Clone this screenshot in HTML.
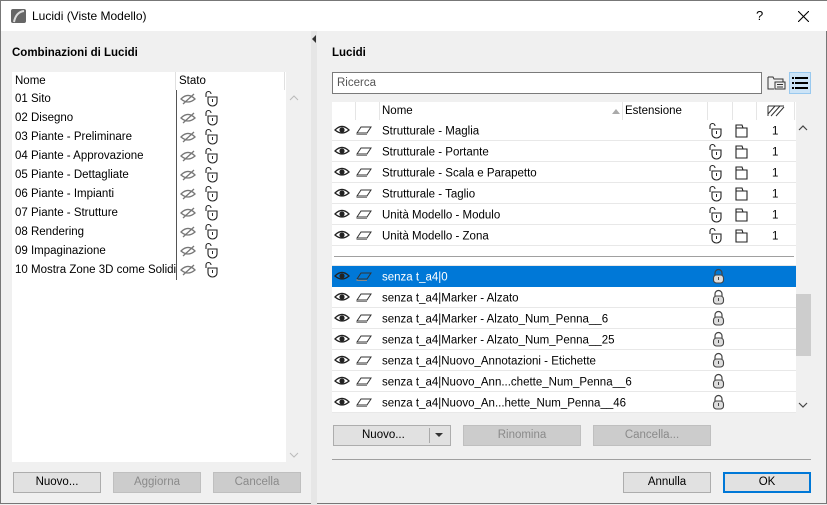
<!DOCTYPE html>
<html><head><meta charset="utf-8"><style>
*{margin:0;padding:0;box-sizing:border-box}
body{width:827px;height:504px;background:#f0f0f0;font-family:"Liberation Sans",sans-serif;font-size:11.5px;color:#000;position:relative;overflow:hidden;border:1px solid #777}
.a{position:absolute}
.t{white-space:nowrap}
.btn{position:absolute;height:21px;border:1px solid #adadad;background:#e1e1e1;text-align:center;line-height:19px;font-size:11.5px}
.dis{color:#8a8a8a;background:#cccccc;border-color:#bfbfbf}
.row{position:absolute;left:0;width:464px;height:21px;border-bottom:1px solid #e8e8e8;background:#fff}
.lr{position:absolute;left:0;height:19px;line-height:19px;padding-left:3px;white-space:nowrap}
</style></head><body>
<div class="a" style="left:0;top:0;width:827px;height:30px;background:#fff"></div>
<svg class="a" style="left:10px;top:8px" width="15" height="14"><rect width="15" height="14" rx="2" fill="#666"/><path d="M3 13 Q5 3 13 2" stroke="#ddd" stroke-width="2" fill="none"/></svg>
<div class="a t" style="left:31px;top:8px;font-size:12px">Lucidi (Viste Modello)</div>
<div class="a t" style="left:755px;top:7px;font-size:13px">?</div>
<svg class="a" style="left:797px;top:10px" width="11" height="11"><path d="M0 0L11 11M11 0L0 11" stroke="#000" stroke-width="1.1"/></svg>

<div class="a" style="left:310px;top:30px;width:6px;height:474px;background:#e6e6e6"></div>
<div class="a" style="left:311px;top:34px;width:0;height:0;border-top:4px solid transparent;border-bottom:4px solid transparent;border-right:4px solid #333"></div>

<div class="a t" style="left:11px;top:46px;font-weight:bold;font-size:11.5px">Combinazioni di Lucidi</div>
<div class="a" style="left:11px;top:71px;width:274px;height:390px;background:#fff"></div>
<div class="a t" style="left:14px;top:74px">Nome</div>
<div class="a" style="left:174px;top:71px;width:1px;height:18px;background:#e0e0e0"></div>
<div class="a t" style="left:178px;top:74px">Stato</div>
<div class="a" style="left:283px;top:71px;width:1px;height:18px;background:#e0e0e0"></div>
<div class="a" style="left:175px;top:89px;width:1px;height:190px;background:#555"></div>
<div class="a" style="left:11px;top:89px;width:165px;height:200px;overflow:hidden">
<div class="lr" style="top:0">01 Sito</div>
<div class="lr" style="top:19px">02 Disegno</div>
<div class="lr" style="top:38px">03 Piante - Preliminare</div>
<div class="lr" style="top:57px">04 Piante - Approvazione</div>
<div class="lr" style="top:76px">05 Piante - Dettagliate</div>
<div class="lr" style="top:95px">06 Piante - Impianti</div>
<div class="lr" style="top:114px">07 Piante - Strutture</div>
<div class="lr" style="top:133px">08 Rendering</div>
<div class="lr" style="top:152px">09 Impaginazione</div>
<div class="lr" style="top:171px">10 Mostra Zone 3D come Solidi</div>
</div>
<svg class="a" style="left:178px;top:89px" width="45" height="190">
<defs><g id="hs"><path d="M2 9 Q9 2 16 9 Q9 15 2 9Z" fill="none" stroke="#777" stroke-width="1.3"/><path d="M4 14L15 4" stroke="#777" stroke-width="1.3"/></g>
<g id="ul"><path d="M27 7V4a2.5 2.5 0 0 1 5 0" fill="none" stroke="#222" stroke-width="1.1"/><path d="M29 7h9v5a4.5 4 0 0 1-9 0z" fill="none" stroke="#222" stroke-width="1.1"/><path d="M33.5 9v3" stroke="#222"/></g></defs>
<g><use href="#hs"/><use href="#ul"/></g>
<g transform="translate(0,19)"><use href="#hs"/><use href="#ul"/></g>
<g transform="translate(0,38)"><use href="#hs"/><use href="#ul"/></g>
<g transform="translate(0,57)"><use href="#hs"/><use href="#ul"/></g>
<g transform="translate(0,76)"><use href="#hs"/><use href="#ul"/></g>
<g transform="translate(0,95)"><use href="#hs"/><use href="#ul"/></g>
<g transform="translate(0,114)"><use href="#hs"/><use href="#ul"/></g>
<g transform="translate(0,133)"><use href="#hs"/><use href="#ul"/></g>
<g transform="translate(0,152)"><use href="#hs"/><use href="#ul"/></g>
<g transform="translate(0,171)"><use href="#hs"/><use href="#ul"/></g>
</svg>
<svg class="a" style="left:288px;top:94px" width="10" height="6"><path d="M1 5L5 1L9 5" stroke="#bbb" fill="none"/></svg>
<svg class="a" style="left:288px;top:451px" width="10" height="6"><path d="M1 1L5 5L9 1" stroke="#bbb" fill="none"/></svg>
<div class="btn" style="left:12px;top:471px;width:88px">Nuovo...</div>
<div class="btn dis" style="left:112px;top:471px;width:88px">Aggiorna</div>
<div class="btn dis" style="left:212px;top:471px;width:88px">Cancella</div>

<div class="a t" style="left:331px;top:46px;font-weight:bold">Lucidi</div>
<div class="a" style="left:331px;top:71px;width:430px;height:22px;border:1px solid #7a7a7a;background:#fff"></div>
<div class="a t" style="left:336px;top:76px;color:#555">Ricerca</div>
<svg class="a" style="left:766px;top:74px" width="20" height="16"><path d="M1 2h5l1 2h9v3" fill="none" stroke="#333"/><path d="M1 2v12h6" fill="none" stroke="#333"/><rect x="8" y="7" width="10" height="7" fill="none" stroke="#333"/><path d="M10 9.5h6M10 12h6" stroke="#333"/></svg>
<div class="a" style="left:788px;top:71px;width:22px;height:22px;background:#cce4f7;border:1px solid #99c9ef"></div>
<svg class="a" style="left:791px;top:76px" width="16" height="12"><g fill="#000"><rect x="0" y="0" width="2" height="2"/><rect x="3" y="0" width="13" height="2"/><rect x="0" y="5" width="2" height="2"/><rect x="3" y="5" width="13" height="2"/><rect x="0" y="10" width="2" height="2"/><rect x="3" y="10" width="13" height="2"/></g></svg>

<div class="a" style="left:331px;top:101px;width:464px;height:311px;background:#fff;overflow:hidden">
<div class="a" style="left:23px;top:0;width:1px;height:18px;background:#e5e5e5"></div>
<div class="a" style="left:47px;top:0;width:1px;height:18px;background:#e5e5e5"></div>
<div class="a t" style="left:50px;top:3px">Nome</div>
<div class="a" style="left:280px;top:7px;width:0;height:0;border-left:4px solid transparent;border-right:4px solid transparent;border-bottom:5px solid #aaa"></div>
<div class="a" style="left:290px;top:0;width:1px;height:18px;background:#e5e5e5"></div>
<div class="a t" style="left:293px;top:3px">Estensione</div>
<div class="a" style="left:375px;top:0;width:1px;height:18px;background:#e5e5e5"></div>
<div class="a" style="left:400px;top:0;width:1px;height:18px;background:#e5e5e5"></div>
<div class="a" style="left:424px;top:0;width:1px;height:18px;background:#e5e5e5"></div>
<div class="a" style="left:462px;top:0;width:1px;height:18px;background:#e5e5e5"></div>
<svg class="a" style="left:435px;top:3px" width="18" height="12"><path d="M1 1h16M1 1v10M1 9l7-8M4 11l9-10M9 11l8-9" stroke="#333" fill="none"/></svg>
</div>

<svg width="0" height="0" style="position:absolute"><defs>
<g id="eye"><path d="M3 10 Q10 3 17 10 Q10 16 3 10Z" fill="none" stroke="#222" stroke-width="1.3"/><circle cx="10" cy="10" r="2.6" fill="#222"/></g>
<g id="lay"><path d="M25 13 L29 7 H39 L35 13Z" fill="none" stroke="#333" stroke-width="1"/><path d="M25 13v1.5h10" stroke="#888" fill="none"/></g>
<g id="ulk"><path d="M378 9V6a2.5 2.5 0 0 1 5 0" fill="none" stroke="#222" stroke-width="1.1"/><path d="M380 9h9v5a4.5 4 0 0 1-9 0z" fill="none" stroke="#222" stroke-width="1.1"/><path d="M384.5 11v3" stroke="#222"/></g>
<g id="fld"><path d="M404 5h6l1 3h4v9h-11z" fill="none" stroke="#222" stroke-width="1.1"/><path d="M404 8h7" stroke="#222"/></g>
<g id="lk"><path d="M383 9V7a3.5 3.5 0 0 1 7 0v2" fill="none" stroke="#444" stroke-width="1.2"/><rect x="381.5" y="9" width="10" height="8" rx="3" fill="#ddd" stroke="#444" stroke-width="1.1"/><path d="M386.5 11v3" stroke="#444"/></g>
</defs></svg>

<div class="a" style="left:331px;top:119px;width:464px;height:293px;overflow:hidden">
<div class="row" style="top:0"></div><div class="row" style="top:21px"></div><div class="row" style="top:42px"></div><div class="row" style="top:63px"></div><div class="row" style="top:84px"></div><div class="row" style="top:105px"></div>
<div class="row" style="top:126px;height:20px"></div>
<div class="a" style="left:2px;top:136px;width:460px;height:1px;background:#a0a0a0"></div>
<div class="row" style="top:146px;background:#0078d7;border-color:#0078d7"></div>
<div class="row" style="top:167px"></div><div class="row" style="top:188px"></div><div class="row" style="top:209px"></div><div class="row" style="top:230px"></div><div class="row" style="top:251px"></div><div class="row" style="top:272px"></div>
<svg class="a" style="left:0;top:0" width="464" height="293">
<g><use href="#eye"/><use href="#lay"/><use href="#ulk"/><use href="#fld"/></g>
<g transform="translate(0,21)"><use href="#eye"/><use href="#lay"/><use href="#ulk"/><use href="#fld"/></g>
<g transform="translate(0,42)"><use href="#eye"/><use href="#lay"/><use href="#ulk"/><use href="#fld"/></g>
<g transform="translate(0,63)"><use href="#eye"/><use href="#lay"/><use href="#ulk"/><use href="#fld"/></g>
<g transform="translate(0,84)"><use href="#eye"/><use href="#lay"/><use href="#ulk"/><use href="#fld"/></g>
<g transform="translate(0,105)"><use href="#eye"/><use href="#lay"/><use href="#ulk"/><use href="#fld"/></g>
<g transform="translate(0,146)"><use href="#eye"/><use href="#lay"/><use href="#lk"/></g>
<g transform="translate(0,167)"><use href="#eye"/><use href="#lay"/><use href="#lk"/></g>
<g transform="translate(0,188)"><use href="#eye"/><use href="#lay"/><use href="#lk"/></g>
<g transform="translate(0,209)"><use href="#eye"/><use href="#lay"/><use href="#lk"/></g>
<g transform="translate(0,230)"><use href="#eye"/><use href="#lay"/><use href="#lk"/></g>
<g transform="translate(0,251)"><use href="#eye"/><use href="#lay"/><use href="#lk"/></g>
<g transform="translate(0,272)"><use href="#eye"/><use href="#lay"/><use href="#lk"/></g>
<g font-family="Liberation Sans" font-size="11.5" fill="#000">
<text x="50" y="14.5">Strutturale - Maglia</text>
<text x="50" y="35.5">Strutturale - Portante</text>
<text x="50" y="56.5">Strutturale - Scala e Parapetto</text>
<text x="50" y="77.5">Strutturale - Taglio</text>
<text x="50" y="98.5">Unità Modello - Modulo</text>
<text x="50" y="119.5">Unità Modello - Zona</text>
<text x="50" y="160.5" fill="#fff">senza t_a4|0</text>
<text x="50" y="181.5">senza t_a4|Marker - Alzato</text>
<text x="50" y="202.5">senza t_a4|Marker - Alzato_Num_Penna__6</text>
<text x="50" y="223.5">senza t_a4|Marker - Alzato_Num_Penna__25</text>
<text x="50" y="244.5">senza t_a4|Nuovo_Annotazioni - Etichette</text>
<text x="50" y="265.5">senza t_a4|Nuovo_Ann...chette_Num_Penna__6</text>
<text x="50" y="286.5">senza t_a4|Nuovo_An...hette_Num_Penna__46</text>
<text x="440" y="14.5">1</text><text x="440" y="35.5">1</text><text x="440" y="56.5">1</text><text x="440" y="77.5">1</text><text x="440" y="98.5">1</text><text x="440" y="119.5">1</text>
</g>
</svg>
</div>
<svg class="a" style="left:797px;top:124px" width="10" height="6"><path d="M1 5L5 1L9 5" stroke="#444" fill="none" stroke-width="1.2"/></svg>
<div class="a" style="left:795px;top:293px;width:15px;height:62px;background:#cdcdcd"></div>
<svg class="a" style="left:797px;top:401px" width="10" height="6"><path d="M1 1L5 5L9 1" stroke="#444" fill="none" stroke-width="1.2"/></svg>

<div class="btn" style="left:332px;top:424px;width:118px;text-align:left;padding-left:28px">Nuovo...</div>
<div class="a" style="left:428px;top:427px;width:1px;height:15px;background:#aaa"></div>
<div class="a" style="left:434px;top:432px;width:0;height:0;border-left:4px solid transparent;border-right:4px solid transparent;border-top:4px solid #333"></div>
<div class="btn dis" style="left:462px;top:424px;width:118px">Rinomina</div>
<div class="btn dis" style="left:592px;top:424px;width:118px">Cancella...</div>
<div class="a" style="left:331px;top:458px;width:479px;height:1px;background:#a0a0a0"></div>
<div class="btn" style="left:622px;top:471px;width:88px">Annulla</div>
<div class="btn" style="left:722px;top:471px;width:88px;border:2px solid #0078d7;line-height:17px">OK</div>
</body></html>
